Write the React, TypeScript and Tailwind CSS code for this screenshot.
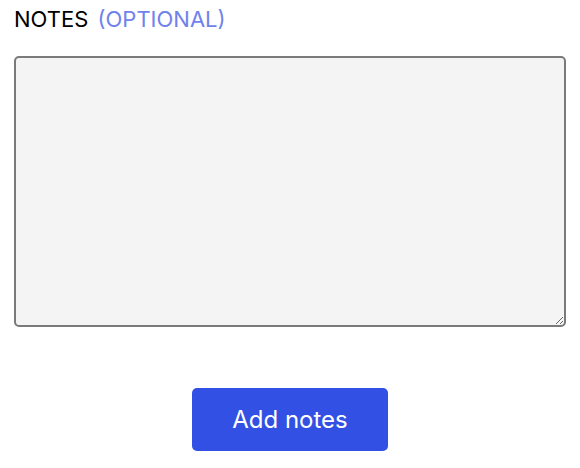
import React from 'react';

export default function App() {
  return (
    <div className="w-[580px] h-[468px] bg-white px-[14px] pt-[4px] font-['Inter',sans-serif]">
      <label className="block text-[22px] leading-[30px] text-black">
        NOTES <span className="ml-[3px] text-[#7082ec]">(OPTIONAL)</span>
      </label>
      <textarea
        className="block mt-[22px] w-[552px] h-[271px] bg-[#f4f4f4] border-2 border-[#7a7a7a] rounded-[5px] resize-y outline-none"
      />
      <div className="flex justify-center mt-[61px]">
        <button className="w-[196px] h-[63px] bg-[#3350e4] text-white text-[24px] rounded-[5px]">
          Add notes
        </button>
      </div>
    </div>
  );
}
